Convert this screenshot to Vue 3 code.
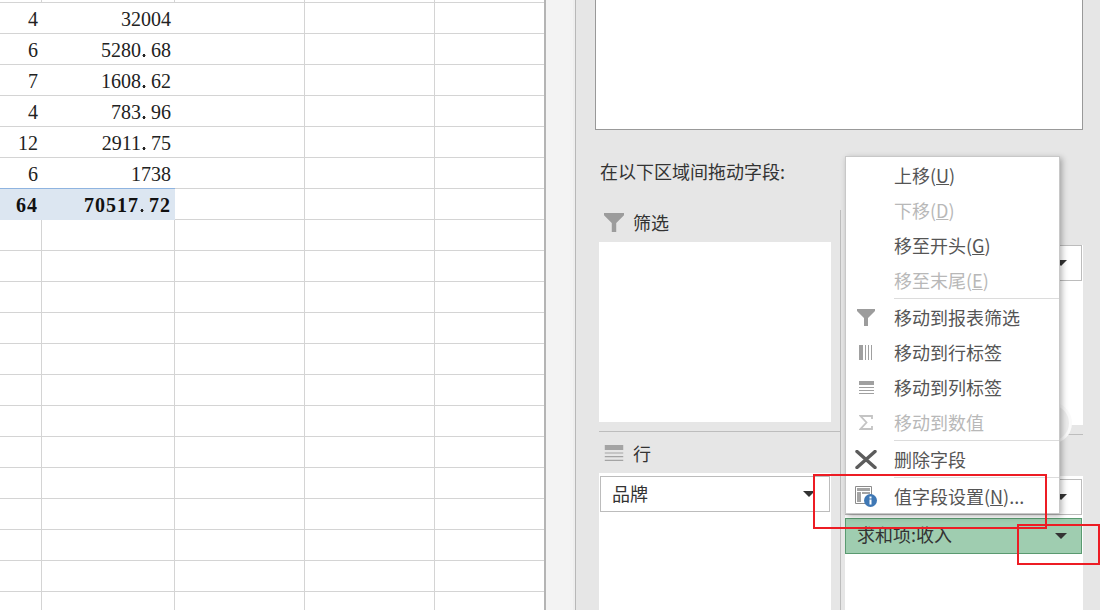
<script setup>
const rows = [
  { count: 4, value: '32004' },
  { count: 6, value: '5280.68' },
  { count: 7, value: '1608.62' },
  { count: 4, value: '783.96' },
  { count: 12, value: '2911.75' },
  { count: 6, value: '1738' }
];
const emptyRows = 13;

const menuTop = [
  { label: '上移', key: 'U' },
  { label: '下移', key: 'D', disabled: true },
  { label: '移至开头', key: 'G' },
  { label: '移至末尾', key: 'E', disabled: true }
];
const menuMove = [
  { label: '移动到报表筛选', icon: 'filter' },
  { label: '移动到行标签', icon: 'cols' },
  { label: '移动到列标签', icon: 'rows' },
  { label: '移动到数值', icon: 'sigma', disabled: true }
];

const splitValue = (value) => value.split('.');
</script>

<template>
  <div class="page">
    <div class="sheet">
      <div class="row first">
        <div class="cell c0"></div><div class="cell c1"></div><div class="cell c2"></div><div class="cell c3"></div><div class="cell c4"></div>
      </div>
      <div v-for="(r, i) in rows" :key="i" class="row">
        <div class="cell c0 num">{{ r.count }}</div>
        <div class="cell c1 num">
          <template v-for="(part, j) in splitValue(r.value)" :key="j"><span :class="{ frac: j === 1 }">{{ part }}</span></template>
          <i v-if="r.value.includes('.')" class="dot"></i>
        </div>
        <div class="cell c2"></div><div class="cell c3"></div><div class="cell c4"></div>
      </div>
      <div class="row total">
        <div class="cell c0 num bold">64</div>
        <div class="cell c1 num bold"><span>70517</span><span class="frac">72</span><i class="dot"></i></div>
        <div class="cell c2"></div><div class="cell c3"></div><div class="cell c4"></div>
      </div>
      <div v-for="n in emptyRows" :key="'e' + n" class="row">
        <div class="cell c0"></div><div class="cell c1"></div><div class="cell c2"></div><div class="cell c3"></div><div class="cell c4"></div>
      </div>
    </div>

    <div class="strip"></div>

    <div class="panel">
      <div class="field-list"></div>
      <div class="hint">在以下区域间拖动字段:</div>
      <div class="areas">
        <div class="area-col left">
          <div class="area-title">
            <svg class="title-icon" width="20" height="19" viewBox="0 0 18 17"><path d="M0 0h18v2l-7 7v8H7V9L0 2z" fill="#9c9c9c"/></svg>
            <span>筛选</span>
          </div>
          <div class="well top-well"></div>
          <div class="area-title lower">
            <svg class="title-icon" width="20" height="16" viewBox="0 0 15 13"><path d="M0 0h15v4H0zM0 6h15v1H0zM0 9h15v1H0zM0 12h15v1H0z" fill="#a4a4a4"/></svg>
            <span>行</span>
          </div>
          <div class="well bottom-well">
            <div class="chip">品牌<span class="caret"></span></div>
          </div>
        </div>
        <div class="area-col right">
          <div class="area-title"></div>
          <div class="well top-well">
            <div class="chip"><span class="caret"></span></div>
          </div>
          <div class="area-title lower"></div>
          <div class="well bottom-well">
            <div class="chip"><span class="caret"></span></div>
            <div class="chip active">求和项:收入<span class="caret"></span></div>
          </div>
        </div>
      </div>
    </div>

    <div class="ring"></div>

    <div class="menu">
      <div v-for="m in menuTop" :key="m.key" class="item" :class="{ disabled: m.disabled }">
        <span class="ico"></span>
        <span>{{ m.label }}(<u>{{ m.key }}</u>)</span>
      </div>
      <div class="sep"></div>
      <div v-for="m in menuMove" :key="m.label" class="item" :class="{ disabled: m.disabled }">
        <span class="ico">
          <svg v-if="m.icon === 'filter'" width="18" height="17" viewBox="0 0 18 17"><path d="M0 0h18v2l-7 7v8H7V9L0 2z" fill="#9c9c9c"/></svg>
          <svg v-else-if="m.icon === 'cols'" width="14" height="15" viewBox="0 0 14 15"><path d="M0 0h4v15H0zM6 0h1v15H6zM9 0h1v15H9zM12 0h1v15h-1z" fill="#a0a0a0"/></svg>
          <svg v-else-if="m.icon === 'rows'" width="15" height="13" viewBox="0 0 15 13"><path d="M0 0h15v4H0zM0 6h15v1H0zM0 9h15v1H0zM0 12h15v1H0z" fill="#a0a0a0"/></svg>
          <svg v-else width="14" height="15" viewBox="0 0 14 15"><path d="M13 4V1H1.500l6 6.500-6 6.500H13v-3" fill="none" stroke="#c4c4c4" stroke-width="1.800"/></svg>
        </span>
        <span>{{ m.label }}</span>
      </div>
      <div class="sep"></div>
      <div class="item">
        <span class="ico">
          <svg width="22" height="19" viewBox="0 0 22 19"><path d="M2 1.500l18 16M20 1.500l-18 16" stroke="#5c5c5c" stroke-width="3.400" stroke-linecap="round" fill="none"/></svg>
        </span>
        <span>删除字段</span>
      </div>
      <div class="sep"></div>
      <div class="item">
        <span class="ico">
          <svg width="22" height="21" viewBox="0 0 22 21">
            <path d="M.5.500h16v17H.5z" fill="#fff" stroke="#8c8c8c"/>
            <path d="M2 2h13v3H2zM2 6h4v10H2zM7 6h8v2H7z" fill="#a4a4a4"/>
            <circle cx="15.500" cy="14.500" r="6.500" fill="#3f78b5"/>
            <path d="M14.500 10.500h2v2h-2zM14.500 13.500h2v5h-2z" fill="#fff"/>
          </svg>
        </span>
        <span>值字段设置(<u>N</u>)...</span>
      </div>
    </div>

    <div class="mark mark-a"></div>
    <div class="mark mark-b"></div>
  </div>
</template>

<style>
html, body {
  margin: 0;
  overflow: hidden;
}
</style>

<style scoped>
.page {
  position: relative;
  display: flex;
  width: 1100px;
  height: 610px;
  overflow: hidden;
  background: #fff;
  font-family: "Noto Sans CJK SC", "Liberation Sans", sans-serif;
}

.sheet {
  flex: none;
  width: 544px;
  height: 610px;
  overflow: hidden;
}

.row {
  display: flex;
  height: 31px;
  box-sizing: border-box;
  border-bottom: 1px solid #d4d4d4;
}

.row.first {
  height: 3px;
}

.cell {
  box-sizing: border-box;
  height: 100%;
  border-right: 1px solid #d4d4d4;
}

.c0 { width: 42px; }
.c1 { width: 133px; }
.c2 { width: 130px; }
.c3 { width: 130px; }
.c4 { flex: 1; border-right: 0; }

.num {
  display: flex;
  justify-content: flex-end;
  align-items: center;
  padding: 2px 4px 0 0;
  border-right: 0;
  font: 20px "Liberation Serif", serif;
  color: #222;
}

.frac {
  order: 2;
}

.dot {
  order: 1;
  width: 10px;
  height: 3px;
  margin-top: 11px;
  background: radial-gradient(circle at 3px 1.500px, #222 1.400px, transparent 1.600px);
}

.total .c0,
.total .c1 {
  background: #dce6f1;
  box-shadow: 0 -1px 0 #8fb4e0, 0 1px 0 #dce6f1;
}

.bold {
  font-weight: 700;
  letter-spacing: 1px;
  color: #111;
}

.strip {
  flex: none;
  width: 32px;
  box-sizing: border-box;
  background: linear-gradient(to right, #f3f3f3 27px, #eeeeee 27px);
  border-left: 2px solid #b4b4b4;
  border-right: 1px solid #b8b8b8;
}

.panel {
  flex: 1;
  background: #e6e6e6;
  padding-left: 19px;
  color: #333;
}

.field-list {
  width: 488px;
  height: 130px;
  box-sizing: border-box;
  background: #fff;
  border: 1px solid #999;
  border-top: 0;
}

.hint {
  height: 80px;
  padding: 28px 0 0 5px;
  box-sizing: border-box;
  font-size: 18px;
  line-height: 26px;
}

.areas {
  display: flex;
  margin-left: 4px;
}

.area-col {
  flex: none;
}

.area-col.left {
  width: 242px;
  margin-right: 4px;
  border-right: 1px solid #bdbdbd;
  box-sizing: border-box;
}

.area-col.right {
  width: 238px;
}

.area-title {
  display: flex;
  align-items: center;
  box-sizing: border-box;
  height: 32px;
  padding-bottom: 8px;
  font-size: 18px;
  color: #333;
}

.area-title.lower {
  height: 42px;
  margin-top: 9px;
  padding-bottom: 0;
  border-top: 1px solid #bdbdbd;
}

.title-icon {
  margin: 0 9px 0 5px;
}

.left .well {
  width: 232px;
}

.well {
  background: #fff;
}

.top-well {
  height: 180px;
}

.top-well .chip {
  margin-top: 3px;
}

.bottom-well {
  height: 140px;
  padding-top: 3px;
  box-sizing: border-box;
}

.chip {
  position: relative;
  display: flex;
  align-items: center;
  box-sizing: border-box;
  width: calc(100% - 2px);
  height: 36px;
  margin: 0 0 3px 1px;
  padding: 0 0 2px 11px;
  border: 1px solid #bcbcbc;
  background: #fff;
  font-size: 18px;
  color: #333;
}

.right .chip {
  width: 237px;
  margin-left: 0;
}

.chip.active {
  background: #9fcdb0;
  border-color: #5a9a70;
  padding-bottom: 4px;
}

.caret {
  position: absolute;
  right: 14px;
  top: 14px;
  width: 0;
  height: 0;
  border-left: 6px solid transparent;
  border-right: 6px solid transparent;
  border-top: 6px solid #333;
}

.ring {
  position: absolute;
  left: 1030px;
  top: 402px;
  width: 42px;
  height: 42px;
  border-radius: 50%;
  box-sizing: border-box;
  background: #ededed;
  border: 3px solid #fafafa;
}

.menu {
  position: absolute;
  left: 845px;
  top: 156px;
  width: 215px;
  height: 358px;
  box-sizing: border-box;
  padding-top: 1px;
  background: #fff;
  border: 1px solid #c8c8c8;
  box-shadow: 2px 2px 6px rgba(0, 0, 0, 0.3);
}

.item {
  display: flex;
  align-items: center;
  box-sizing: border-box;
  height: 35px;
  font-size: 18px;
  color: #555;
}

.item > span:last-child {
  position: relative;
  top: -1px;
}

.item.disabled {
  color: #b8b8b8;
}

.ico {
  flex: none;
  display: flex;
  justify-content: center;
  align-items: center;
  width: 40px;
  margin-right: 8px;
}

.sep {
  height: 1px;
  margin: 0 0 1px 48px;
  background: #dcdcdc;
}

.mark {
  position: absolute;
  box-sizing: border-box;
  border: 2px solid #ed1c24;
}

.mark-a {
  left: 813px;
  top: 474px;
  width: 234px;
  height: 55px;
}

.mark-b {
  left: 1017px;
  top: 524px;
  width: 83px;
  height: 41px;
}
</style>
